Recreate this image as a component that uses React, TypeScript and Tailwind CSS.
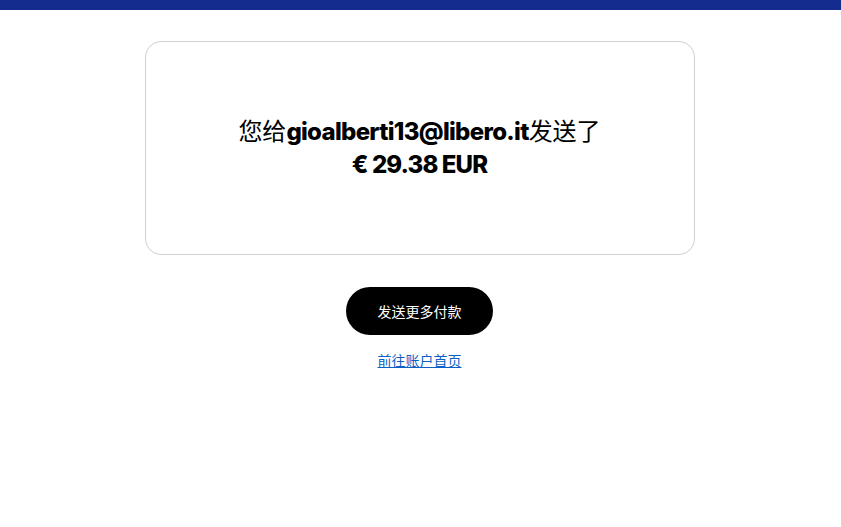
import React from "react";

export default function App() {
  return (
    <div className="min-h-[527px] w-full bg-white" style={{ fontFamily: 'Inter, "Noto Sans CJK SC", sans-serif' }}>
      <div className="h-[10px] w-full bg-[#142c8e]" />
      <div className="flex flex-col items-center pr-[2px]">
        <div className="mt-[31px] flex h-[214px] w-[550px] flex-col items-center justify-center rounded-[16px] border border-[#d2d2d2] text-center text-[24px] leading-[33px] text-black">
          <div>
            <span className="font-normal">您给</span>
            <span className="font-extrabold tracking-[-0.7px]">gioalberti13@libero.it</span>
            <span className="font-normal">发送了</span>
          </div>
          <div className="font-extrabold tracking-[-0.9px]">€ 29.38 EUR</div>
        </div>
        <button className="mt-[32px] flex h-[48px] w-[147px] items-center justify-center rounded-full bg-black text-[14px] text-white">
          发送更多付款
        </button>
        <a href="#" className="mt-[16px] text-[14px] leading-[20px] text-[#0b5fc4] underline">
          前往账户首页
        </a>
      </div>
    </div>
  );
}
